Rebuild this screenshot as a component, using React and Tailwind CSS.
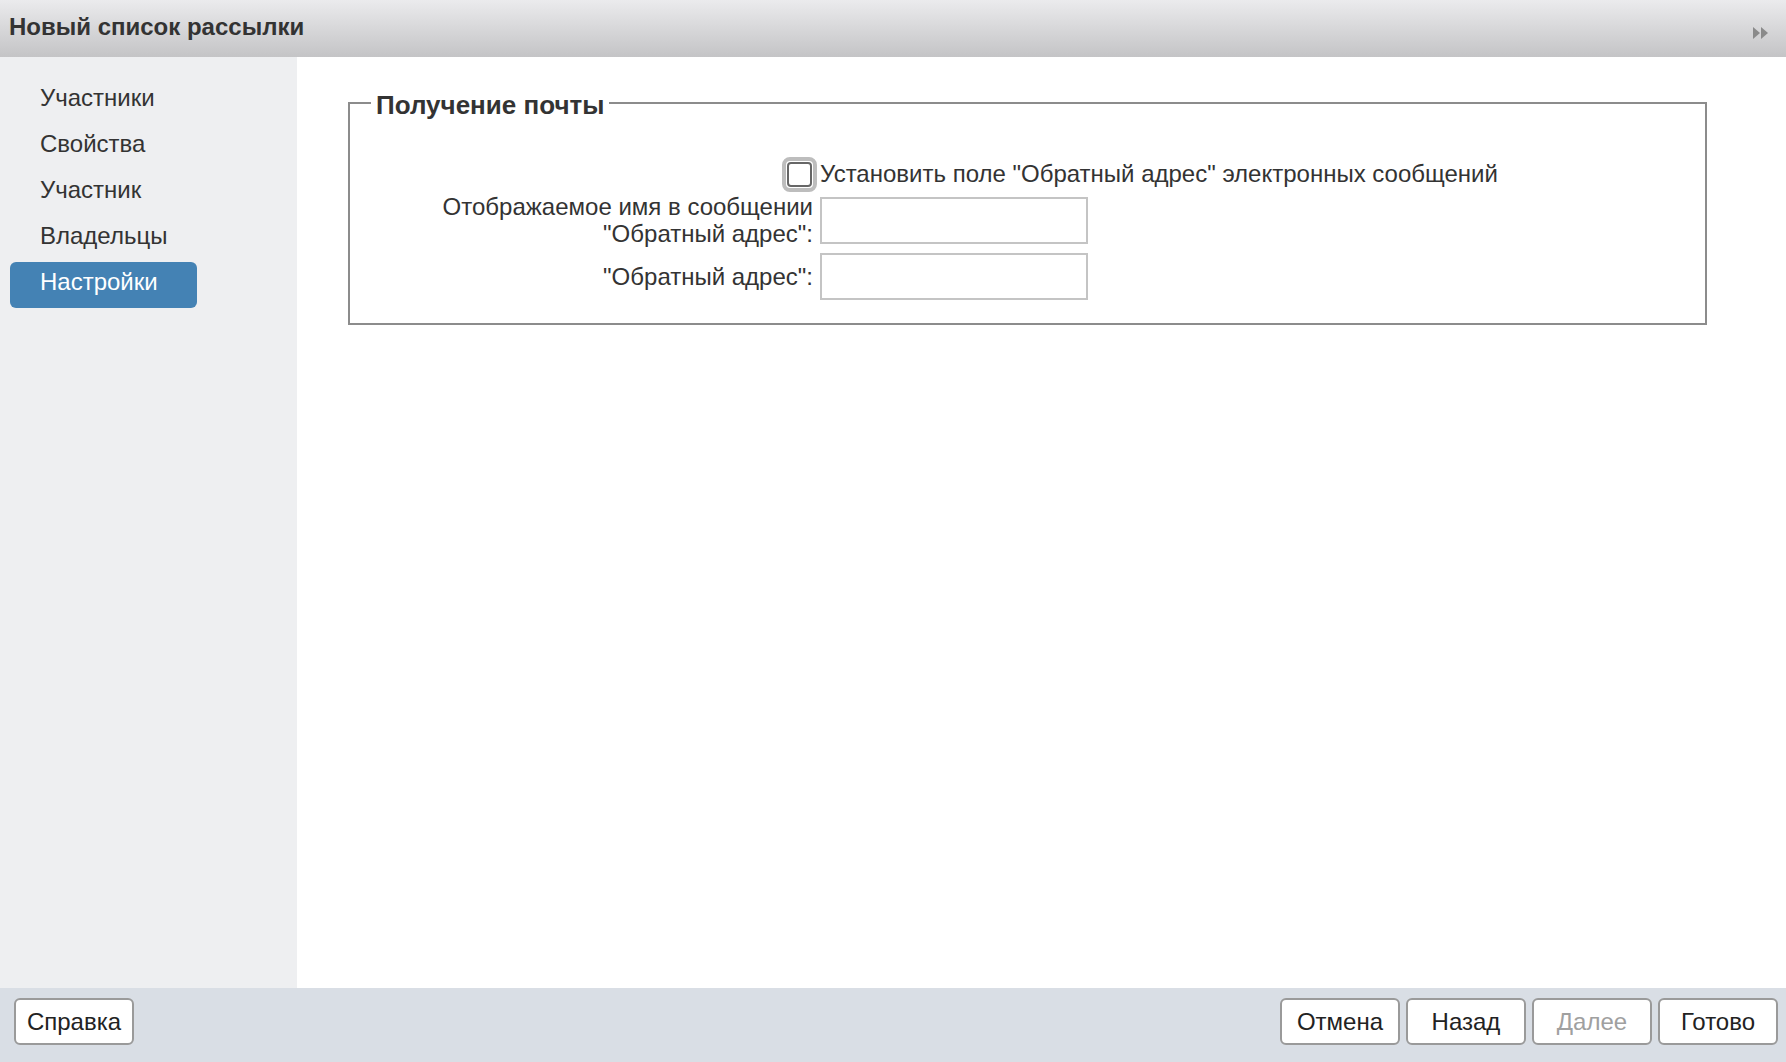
import React from "react";

// Left navigation of the wizard
const steps = ["Участники", "Свойства", "Участник", "Владельцы", "Настройки"];

const FooterButton = ({ children, disabled }) => (
  <button
    type="button"
    disabled={disabled}
    className={`h-[47px] w-[120px] rounded-[6px] border-2 border-[#9a9a9a] bg-white text-[24px] ${
      disabled ? "text-[#a0a0a0]" : "text-[#222]"
    }`}
  >
    {children}
  </button>
);

export default function App() {
  return (
    <div
      className="flex h-screen w-full flex-col overflow-hidden bg-white text-[#333]"
      style={{ fontFamily: '"Liberation Sans", Arial, sans-serif' }}
    >
      {/* title bar */}
      <div className="flex h-[57px] shrink-0 items-center justify-between bg-gradient-to-b from-[#ebebed] to-[#c4c4c6] pl-[9px] pr-[16px]">
        <div className="-mt-[4px] text-[24px] font-bold text-[#333]">Новый список рассылки</div>
        <svg width="18" height="14" viewBox="0 0 18 14" className="mt-[8px]">
          <path d="M1 1 L8 7 L1 13 Z" fill="#8a8a8a" />
          <path d="M9 1 L16 7 L9 13 Z" fill="#8a8a8a" />
        </svg>
      </div>

      <div className="flex min-h-0 flex-1">
        {/* sidebar */}
        <div className="w-[297px] shrink-0 bg-[#eeeff1] pl-[10px] pt-[21px]">
          {steps.map((s, i) => {
            const active = i === steps.length - 1;
            return (
              <div
                key={s}
                className={`flex h-[46px] w-[187px] items-center rounded-[6px] pb-[7px] pl-[30px] text-[24px] ${
                  active ? "bg-[#4482b4] text-white" : "text-[#333]"
                }`}
              >
                {s}
              </div>
            );
          })}
        </div>

        {/* main */}
        <div className="min-w-0 flex-1 pl-[51px] pr-[79px] pt-[29px]">
          <fieldset className="border-2 border-[#8c8c8c] pb-[23px] pl-[21px]">
            <legend className="px-[5px] text-[26px] font-bold leading-[30px] text-[#333]">
              <span className="block pt-[4px]">Получение почты</span>
            </legend>
            <div className="mt-[36px] grid grid-cols-[446px_auto] items-center gap-y-[1px]">
              <div className="flex justify-end">
                <div className="rounded-[8px] border-[4px] border-[#bdbdbd] p-[1px]">
                  <div className="h-[25px] w-[25px] rounded-[4px] border-2 border-[#666] bg-white" />
                </div>
              </div>
              <div className="pl-[3px] text-[24px] text-[#333]">
                Установить поле "Обратный адрес" электронных сообщений
              </div>

              <div className="pr-[4px] text-right text-[24px] leading-[27px] text-[#333]">
                Отображаемое имя в сообщении
                <br />
                "Обратный адрес":
              </div>
              <div className="pl-[3px]">
                <input type="text" className="h-[47px] w-[268px] border-2 border-[#c4c4c4] bg-white outline-none" />
              </div>

              <div className="mt-[5px] pr-[4px] text-right text-[24px] text-[#333]">"Обратный адрес":</div>
              <div className="mt-[5px] pl-[3px]">
                <input type="text" className="h-[47px] w-[268px] border-2 border-[#c4c4c4] bg-white outline-none" />
              </div>
            </div>
          </fieldset>
        </div>
      </div>

      {/* footer */}
      <div className="flex h-[74px] shrink-0 items-start justify-between bg-[#d9dee5] pl-[14px] pr-[8px] pt-[10px]">
        <FooterButton>Справка</FooterButton>
        <div className="flex gap-[6px]">
          <FooterButton>Отмена</FooterButton>
          <FooterButton>Назад</FooterButton>
          <FooterButton disabled>Далее</FooterButton>
          <FooterButton>Готово</FooterButton>
        </div>
      </div>
    </div>
  );
}
